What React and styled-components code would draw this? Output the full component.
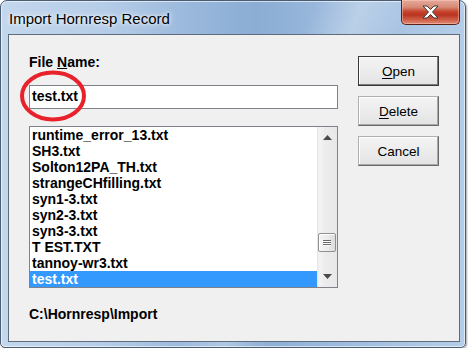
import styled, { createGlobalStyle } from 'styled-components';

const GlobalStyle = createGlobalStyle`
  html, body {
    margin: 0;
    padding: 0;
    background: #ffffff;
  }
  body {
    font-family: "Liberation Sans", Arial, sans-serif;
  }
`;

const files = [
  'runtime_error_13.txt',
  'SH3.txt',
  'Solton12PA_TH.txt',
  'strangeCHfilling.txt',
  'syn1-3.txt',
  'syn2-3.txt',
  'syn3-3.txt',
  'T EST.TXT',
  'tannoy-wr3.txt',
  'test.txt',
];

const Window = styled.div`
  box-sizing: border-box;
  width: 466px;
  height: 348px;
  display: flex;
  flex-direction: column;
  padding: 0 5px 5px 7px;
  border: 1px solid #4a5d72;
  border-radius: 7px 7px 5px 5px;
  background:
    linear-gradient(112deg, rgba(255, 255, 255, 0) 52%, rgba(255, 255, 255, 0.28) 60%, rgba(255, 255, 255, 0) 68%),
    linear-gradient(to right, #c3d7ed 0%, #b6cde8 22%, #98b7db 42%, #8badd4 55%, #9cbadd 72%, #abc6e4 88%, #b4cde8 100%);
  box-shadow: inset 0 0 0 1px rgba(255, 255, 255, 0.6), 1px 1px 2px rgba(0, 0, 0, 0.35);
`;

const TitleBar = styled.div`
  height: 33px;
  display: flex;
  align-items: flex-start;
  justify-content: space-between;
`;

const Title = styled.div`
  padding: 9px 0 0 1px;
  font-size: 15px;
  line-height: 18px;
  color: #000;
  text-shadow: 0 0 6px rgba(255, 255, 255, 0.95), 0 0 3px rgba(255, 255, 255, 0.9);
`;

const CloseButton = styled.div`
  box-sizing: border-box;
  width: 59px;
  height: 25px;
  margin-top: -1px;
  display: flex;
  align-items: center;
  justify-content: center;
  border: 1px solid #5a2119;
  border-top: none;
  border-radius: 0 0 5px 5px;
  background: linear-gradient(#e6aa9b 0%, #d88a76 30%, #c6452f 48%, #b93520 62%, #d2644c 85%, #e08b71 100%);
  box-shadow: inset 0 0 0 1px rgba(255, 210, 200, 0.45);
`;

const Client = styled.div`
  flex: 1;
  display: flex;
  gap: 20px;
  padding: 0 20px;
  border: 1px solid #5e6c7c;
  background: #f0f0f0;
`;

const LeftColumn = styled.div`
  position: relative;
  width: 309px;
  display: flex;
  flex-direction: column;
  padding-top: 19px;
  font-size: 14px;
  font-weight: bold;
  line-height: 16px;
  color: #000;
`;

const Label = styled.div`
  margin-bottom: 15px;
`;

const TextBox = styled.div`
  box-sizing: border-box;
  height: 24px;
  padding: 0 2px;
  line-height: 20px;
  border: 1px solid #7f8289;
  background: #fff;
`;

const ListBox = styled.div`
  box-sizing: border-box;
  height: 162px;
  margin-top: 17px;
  display: flex;
  border: 1px solid #7f8289;
  background: #fff;
`;

const Rows = styled.div`
  flex: 1;
  display: flex;
  flex-direction: column;
`;

const Row = styled.div`
  height: 16px;
  padding-left: 2px;
  white-space: pre;
  color: ${(p) => (p.$selected ? '#fff' : '#000')};
  background: ${(p) => (p.$selected ? '#3399ff' : 'transparent')};
`;

const ScrollBar = styled.div`
  width: 20px;
  display: flex;
  flex-direction: column;
  background: linear-gradient(to right, #e4e4e4 0%, #f4f4f4 12%, #ececec 40%, #e8e8e8 100%);
`;

const ArrowCell = styled.div`
  height: 17px;
  display: flex;
  justify-content: center;
  padding-top: ${(p) => p.$top}px;
  box-sizing: border-box;
`;

const Track = styled.div`
  flex: 1;
  display: flex;
  flex-direction: column;
  align-items: flex-start;
  padding-left: 1px;
`;

const Thumb = styled.div`
  box-sizing: border-box;
  width: 18px;
  height: 19px;
  display: flex;
  flex-direction: column;
  align-items: center;
  justify-content: center;
  gap: 1px;
  border: 1px solid #8f9091;
  border-radius: 2px;
  background: linear-gradient(to right, #f6f6f6 0%, #ececec 50%, #dcdcdc 100%);
  box-shadow: inset 1px 1px 0 #fff;
`;

const Grip = styled.div`
  width: 8px;
  height: 1px;
  background: #6a6a6a;
  box-shadow: 0 1px 0 #fdfdfd;
`;

const PathText = styled.div`
  margin-top: 18px;
`;

const Ring = styled.svg`
  position: absolute;
  left: -12px;
  top: 34px;
  pointer-events: none;
`;

const ButtonColumn = styled.div`
  width: 81px;
  display: flex;
  flex-direction: column;
  gap: 10px;
  padding-top: 21px;
`;

const Button = styled.div`
  box-sizing: border-box;
  height: 30px;
  display: flex;
  align-items: center;
  justify-content: center;
  font-size: 13.5px;
  color: #000;
  border: 1px solid;
  border-color: ${(p) => (p.$default ? '#3a3a3a' : '#b0b0b0 #6a6a6a #6a6a6a #b0b0b0')};
  background: linear-gradient(#f4f4f4, #ebebeb 55%, #e3e3e3);
  box-shadow: ${(p) =>
    p.$default ? 'inset -1px -1px 0 #7a7a7a, inset 1px 1px 0 #fdfdfd' : 'inset -1px -1px 0 #a8a8a8, inset 1px 1px 0 #fdfdfd'};

  u {
    text-decoration: underline;
    text-underline-offset: 2px;
  }
`;

const CloseGlyph = () => (
  <svg width="17" height="14" viewBox="0 0 17 14">
    <polygon
      points="1,1 5,1 8.5,4.5 12,1 16,1 10.5,7 16,13 12,13 8.5,9.5 5,13 1,13 6.5,7"
      fill="#ffffff"
      stroke="#3a3a3a"
      strokeWidth="1"
      strokeLinejoin="round"
    />
  </svg>
);

const Arrow = ({ down }) => (
  <svg width="9" height="5" viewBox="0 0 9 5">
    <polygon points={down ? '0,0 9,0 4.5,5' : '4.5,0 9,5 0,5'} fill="#4a4a4a" />
  </svg>
);

export default function App() {
  return (
    <>
      <GlobalStyle />
      <Window>
        <TitleBar>
          <Title>Import Hornresp Record</Title>
          <CloseButton>
            <CloseGlyph />
          </CloseButton>
        </TitleBar>
        <Client>
          <LeftColumn>
            <Label>
              File <u>N</u>ame:
            </Label>
            <TextBox>test.txt</TextBox>
            <ListBox>
              <Rows>
                {files.map((f) => (
                  <Row key={f} $selected={f === 'test.txt'}>
                    {f}
                  </Row>
                ))}
              </Rows>
              <ScrollBar>
                <ArrowCell $top={8}>
                  <Arrow />
                </ArrowCell>
                <Track>
                  <Thumb style={{ marginTop: 89 }}>
                    <Grip />
                    <Grip />
                    <Grip />
                  </Thumb>
                </Track>
                <ArrowCell $top={4}>
                  <Arrow down />
                </ArrowCell>
              </ScrollBar>
            </ListBox>
            <PathText>C:\Hornresp\Import</PathText>
            <Ring width="72" height="54" viewBox="0 0 72 54">
              <ellipse cx="36" cy="27" rx="31" ry="23.5" fill="none" stroke="#e8212b" strokeWidth="4" />
            </Ring>
          </LeftColumn>
          <ButtonColumn>
            <Button $default>
              <span>
                <u>O</u>pen
              </span>
            </Button>
            <Button>
              <span>
                <u>D</u>elete
              </span>
            </Button>
            <Button>Cancel</Button>
          </ButtonColumn>
        </Client>
      </Window>
    </>
  );
}
